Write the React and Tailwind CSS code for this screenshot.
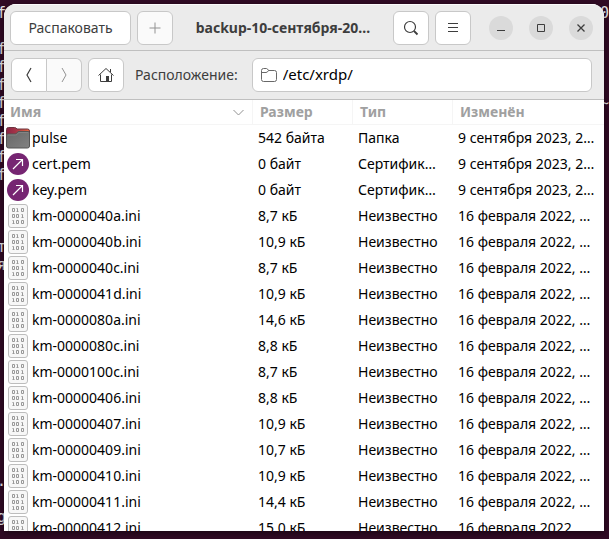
const unknownFiles = [
  ['km-0000040a.ini', '8,7 кБ'],
  ['km-0000040b.ini', '10,9 кБ'],
  ['km-0000040c.ini', '8,7 кБ'],
  ['km-0000041d.ini', '10,9 кБ'],
  ['km-0000080a.ini', '14,6 кБ'],
  ['km-0000080c.ini', '8,8 кБ'],
  ['km-0000100c.ini', '8,7 кБ'],
  ['km-00000406.ini', '8,8 кБ'],
  ['km-00000407.ini', '10,9 кБ'],
  ['km-00000409.ini', '10,7 кБ'],
  ['km-00000410.ini', '10,9 кБ'],
  ['km-00000411.ini', '14,4 кБ'],
  ['km-00000412.ini', '15,0 кБ'],
];

const files = [
  { name: 'pulse', size: '542 байта', type: 'Папка', modified: '9 сентября 2023, 2…', icon: 'folder' },
  { name: 'cert.pem', size: '0 байт', type: 'Сертифик…', modified: '9 сентября 2023, 2…', icon: 'link' },
  { name: 'key.pem', size: '0 байт', type: 'Сертифик…', modified: '9 сентября 2023, 2…', icon: 'link' },
  ...unknownFiles.map(([name, size]) => ({
    name,
    size,
    type: 'Неизвестно',
    modified: '16 февраля 2022, …',
    icon: 'binary',
  })),
];

// Characters of the terminal behind the window: [left, right] per line.
const terminalLines = [
  ['f', '0'], ['', ''], ['f', ''], ['f', ''], ['f', ''], ['f', '~'], ['f', ''], ['f', ''], ['f', ''], ['f', ''],
  ['', ''], ['', ''], ['', ''], ['т', ''], ['я', ''], ['', ''], ['', ''], ['', ''], ['', ''], ['', ''],
  ['', ''], ['', ''], ['', ''], ['', ''], ['', ''], ['', ''], ['.', ''], ['', ''], ['g', ''],
];

function FolderIcon() {
  return (
    <svg width="24" height="24" viewBox="0 0 24 24" aria-hidden="true">
      <defs>
        <linearGradient id="tab" x1="0" x2="1">
          <stop offset="0" stopColor="#8c2446" />
          <stop offset="0.4" stopColor="#a53448" />
          <stop offset="1" stopColor="#e8683c" />
        </linearGradient>
        <linearGradient id="front" x1="0" x2="1" y2="1">
          <stop offset="0" stopColor="#676767" />
          <stop offset="1" stopColor="#828282" />
        </linearGradient>
      </defs>
      <path d="M.5 20V3.500Q.5 1.500 2.500 1.500H8.500Q10 1.500 11 3H21.500Q23.500 3 23.500 5V20Z" fill="url(#tab)" stroke="#6b3540" />
      <path d="M.5 9.500Q.5 8 2 8H9Q10 8 11 6.750Q12 5.500 13 5.500H22Q23.500 5.500 23.500 7V20Q23.500 22 21.500 22H2.500Q.5 22 .5 20Z" fill="url(#front)" stroke="#555" />
      <path d="M1.500 9H9.500Q10.500 9 11.500 7.750Q12.500 6.500 13.500 6.500H22.500" fill="none" stroke="#8c8c8c" strokeWidth=".7" />
    </svg>
  );
}

function LinkIcon() {
  return (
    <svg width="24" height="24" viewBox="0 0 24 24" aria-hidden="true">
      <circle cx="12" cy="12" r="11" fill="#762572" />
      <path d="M7 17 16.500 7.500M10 7.500h6.500V14" fill="none" stroke="#fff" strokeWidth="1.200" />
    </svg>
  );
}

const zero = (x, y) => `M${x} ${y}h2v3h-2z`;
const one = (x, y) => `M${x} ${y}h1v3M${x} ${y + 3}h2`;
const digits = [
  zero(6.5, 4.5), one(10.5, 4.5), zero(15.5, 4.5),
  zero(6.5, 10.5), zero(10.5, 10.5), one(15.5, 10.5),
  one(6.5, 16.5), zero(10.5, 16.5), zero(15.5, 16.5),
].join('');

function BinaryIcon() {
  return (
    <svg width="24" height="24" viewBox="0 0 24 24" aria-hidden="true">
      <rect x="2.500" y=".5" width="19" height="23" rx="2.500" fill="#f7f7f7" stroke="#bdbdbd" />
      <path d={digits} fill="none" stroke="#999" />
    </svg>
  );
}

const icons = { folder: FolderIcon, link: LinkIcon, binary: BinaryIcon };

function IconButton({ label, disabled, children, className = 'w-9 rounded-md border' }) {
  return (
    <button
      type="button"
      aria-label={label}
      disabled={disabled}
      className={`flex h-[34px] shrink-0 items-center justify-center border-[#c8c8c8] ${disabled ? 'bg-[#fafafa] text-[#929292]' : 'bg-white text-[#3d3d3d]'} ${className}`}
    >
      <svg width="16" height="16" viewBox="0 0 16 16" fill="none" stroke="currentColor" aria-hidden="true">
        {children}
      </svg>
    </button>
  );
}

function WindowButton({ label, children }) {
  return (
    <button type="button" aria-label={label} className="flex size-6 shrink-0 items-center justify-center rounded-full bg-[#dadada] text-[#3d3d3d]">
      <svg width="16" height="16" viewBox="0 0 16 16" fill="none" stroke="currentColor" aria-hidden="true">
        {children}
      </svg>
    </button>
  );
}

export default function App() {
  return (
    <div className="relative h-screen overflow-hidden bg-[#300a24] font-['Noto_Sans',sans-serif] text-sm text-black">
      <div aria-hidden="true" className="absolute inset-0 overflow-hidden pt-1 font-['DejaVu_Sans_Mono',monospace] text-[15px] leading-[18px] text-[#e6e3e5]">
        {terminalLines.map(([left, right], i) => (
          <div key={i} className="-ml-[3px] flex h-[18px] justify-between">
            <span>{left}</span>
            <span>{right}</span>
          </div>
        ))}
      </div>

      <div className="relative h-full pt-1 pr-[5px] pb-2 pl-1">
        <main className="flex h-full flex-col overflow-hidden rounded-t-xl bg-white shadow-[0_2px_6px_rgba(0,0,0,0.5)]">
          <header className="flex h-[47px] shrink-0 items-center gap-1.5 border-t border-b border-t-[#fafafa] border-b-[#bfbfbf] bg-[#ebebeb] px-1.5 text-[#3d3d3d]">
            <button type="button" className="h-[34px] w-[121px] shrink-0 rounded-md border border-[#c8c8c8] bg-white">
              Распаковать
            </button>
            <IconButton label="Добавить файлы" disabled>
              <path d="M8 2.500v11M2.500 8h11" />
            </IconButton>
            <h1 className="min-w-0 flex-1 truncate text-center font-bold">backup-10-сентября-20…</h1>
            <IconButton label="Поиск">
              <circle cx="7" cy="7" r="5.500" strokeWidth="1.200" />
              <path d="m11 11 3.500 3.500" strokeWidth="1.800" />
            </IconButton>
            <IconButton label="Меню">
              <path d="M3 3.500h10M3 7.500h10M3 11.500h10" />
            </IconButton>
            <div className="flex gap-4 pr-[5px] pl-3">
              <WindowButton label="Свернуть">
                <path d="M4 10.500h8" />
              </WindowButton>
              <WindowButton label="Развернуть">
                <path d="M4.500 4.500h7v7h-7z" />
              </WindowButton>
              <WindowButton label="Закрыть">
                <path d="m4.500 4.500 7 7m0-7-7 7" strokeWidth="1.300" />
              </WindowButton>
            </div>
          </header>

          <nav className="flex h-[49px] shrink-0 items-center border-b border-[#bfbfbf] bg-[#ebebeb] pr-3 pl-[7px] text-[#3d3d3d]">
            <IconButton label="Назад" className="w-9 rounded-l-md border">
              <path d="M10 1 6 8l4 7" strokeWidth="1.200" />
            </IconButton>
            <IconButton label="Вперёд" disabled className="w-[35px] rounded-r-md border border-l-0">
              <path d="m6 1 4 7-4 7" />
            </IconButton>
            <div className="pr-[11px] pl-1.5">
              <IconButton label="Домой">
                <path d="M.5 8.500 8 1.500l7.500 7M12.500 2v3M2.500 7.500v7h11v-7" />
                <path d="M8 9h3v5H8z" fill="currentColor" stroke="none" />
              </IconButton>
            </div>
            <label htmlFor="location" className="pr-3.5">Расположение:</label>
            <div className="flex h-[34px] min-w-0 flex-1 items-center gap-1.5 rounded-md border border-[#c8c8c8] bg-white px-2">
              <svg width="16" height="16" viewBox="0 0 16 16" fill="none" stroke="#686868" className="shrink-0" aria-hidden="true">
                <path d="M.5 12.500v-9Q.5 1.500 2.500 1.500h3Q6.500 1.500 7.500 3.500h6q2 0 2 2v7q0 2-2 2h-11q-2 0-2-2ZM.5 5.500H5q1.500 0 2.500-2" />
              </svg>
              <input id="location" type="text" defaultValue="/etc/xrdp/" className="min-w-0 flex-1 text-[15px] text-black outline-none" />
            </div>
          </nav>

          <div className="min-h-0 flex-1 overflow-hidden">
            <table className="w-full table-fixed border-separate border-spacing-0 text-left whitespace-nowrap">
              <colgroup>
                <col />
                <col className="w-[100px]" />
                <col className="w-[100px]" />
                <col className="w-[151px]" />
              </colgroup>
              <thead className="text-[#a0a0a0]">
                <tr className="h-[25px]">
                  <th className="border-r border-b border-[#f5f5f5] px-1.5 py-0">
                    <div className="flex items-center justify-between">
                      Имя
                      <svg width="16" height="16" viewBox="0 0 16 16" fill="none" stroke="#929292" aria-hidden="true">
                        <path d="m3.500 6 5 5 5-5" />
                      </svg>
                    </div>
                  </th>
                  <th className="border-r border-b border-[#f5f5f5] px-[7px] py-0">Размер</th>
                  <th className="border-r border-b border-[#f5f5f5] px-[7px] py-0">Тип</th>
                  <th className="border-b border-[#f5f5f5] px-[7px] py-0">Изменён</th>
                </tr>
              </thead>
              <tbody>
                {files.map((file) => {
                  const Icon = icons[file.icon];
                  return (
                    <tr key={file.name} className="h-[26px]">
                      <td className="py-0 pl-0.5">
                        <div className="flex items-center gap-0.5">
                          <Icon />
                          {file.name}
                        </div>
                      </td>
                      <td className="py-0 pl-[5px]">{file.size}</td>
                      <td className="py-0 pl-[5px]">{file.type}</td>
                      <td className="py-0 pl-[5px]">{file.modified}</td>
                    </tr>
                  );
                })}
              </tbody>
            </table>
          </div>
        </main>
      </div>
    </div>
  );
}
